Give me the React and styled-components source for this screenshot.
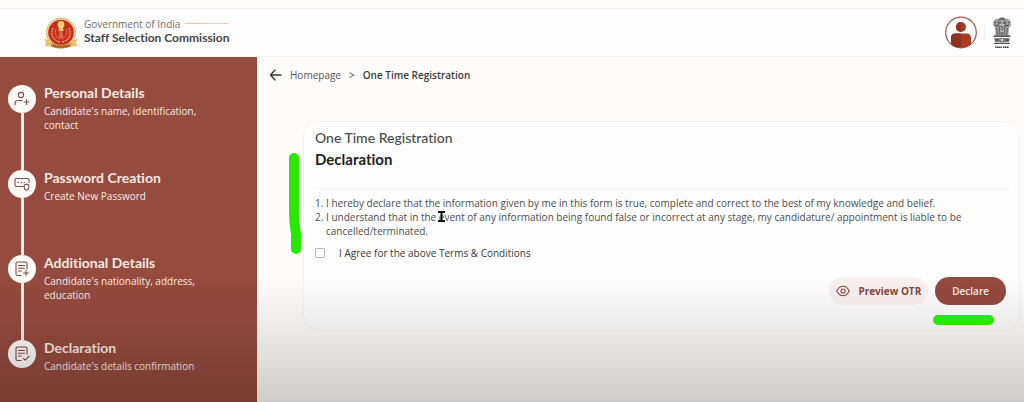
import styled, { createGlobalStyle } from "styled-components";

const GlobalStyle = createGlobalStyle`
    * {
        box-sizing: border-box;
    }
    body {
        margin: 0;
        background: #fefcfa;
        color: #454545;
        font-family: "Open Sans", sans-serif;
        font-size: 10px;
        line-height: 14px;
        font-variant-ligatures: none;
    }
    button, input {
        font: inherit;
    }
`;

const Page = styled.div`
    position: relative;
    min-height: 100vh;
    display: flex;
    flex-direction: column;
`;

const TopStrip = styled.div`
    height: 9px;
    background: #fffdfb;
    border-bottom: 1px solid #f2efec;
`;

const Header = styled.header`
    display: flex;
    align-items: center;
    justify-content: space-between;
    height: 48px;
    padding: 0 12px 0 43px;
    background: #fdfdfd;
    border-bottom: 1px solid #f6f3f1;
`;

const Brand = styled.div`
    display: flex;
    gap: 5px;
`;

const BrandTop = styled.div`
    display: flex;
    align-items: center;
    gap: 5px;
    color: #6f6f6f;
`;

const BrandLine = styled.span`
    flex: 1;
    height: 1px;
    background: linear-gradient(90deg, #f0c3a6, #ead0b4);
`;

const BrandName = styled.div`
    font-family: Lato, sans-serif;
    font-size: 12px;
    font-weight: 700;
    color: #454545;
`;

const HeaderRight = styled.div`
    display: flex;
    align-items: center;
    gap: 7px;
`;

const Separator = styled.span`
    width: 1px;
    height: 16px;
    background: #f3f1f0;
`;

const Body = styled.div`
    flex: 1;
    display: flex;
`;

const Sidebar = styled.aside`
    flex: 0 0 257px;
    padding: 28px 48px 20px 8px;
    background: #954b3e;
    color: #f8e9e3;
`;

const Steps = styled.ol`
    margin: 0;
    padding: 0;
    list-style: none;
`;

const Step = styled.li`
    display: flex;
    gap: 8px;
    min-height: ${(props) => (props.$last ? "0" : "85px")};
`;

const StepTrack = styled.div`
    display: flex;
    flex-direction: column;
    align-items: center;
`;

const StepCircle = styled.div`
    display: flex;
    align-items: center;
    justify-content: center;
    width: 28px;
    height: 28px;
    border-radius: 50%;
    background: #fdfbfa;
`;

const StepLine = styled.div`
    flex: 1;
    width: 3px;
    background: #f9efec;
`;

const StepTitle = styled.div`
    font-family: Lato, sans-serif;
    font-size: 14px;
    line-height: 16px;
    font-weight: 700;
    margin-bottom: 3px;
`;

const Main = styled.main`
    flex: 1;
    min-width: 0;
    padding: 11px 4px 24px 12px;
`;

const Breadcrumb = styled.nav`
    display: flex;
    align-items: center;
    gap: 8px;
`;

const Crumb = styled.a`
    display: flex;
    align-items: center;
    gap: 8px;
    color: #555;
    text-decoration: none;
`;

const Current = styled.span`
    color: #3d3d3d;
    font-weight: 600;
`;

const Card = styled.section`
    margin: 39px 0 0 34px;
    padding: 7px 9px 24px 11px;
    background: #fdfdfd;
    border: 1px solid #f5f2f0;
    border-radius: 15px;
`;

const CardLabel = styled.div`
    font-family: Lato, sans-serif;
    font-size: 14px;
    line-height: 18px;
    font-weight: 500;
    color: #4b4b4b;
`;

const CardTitle = styled.h1`
    margin: 3px 0 0;
    padding-bottom: 20px;
    border-bottom: 1px solid #f2f2f2;
    font-family: Lato, sans-serif;
    font-size: 15px;
    line-height: 18px;
    font-weight: 700;
    color: #222;
`;

const Terms = styled.ol`
    margin: 7px 0 8px;
    padding-left: 11px;
    color: #4d4d4d;
`;

const Agree = styled.label`
    display: flex;
    align-items: center;
    gap: 14px;
    font-weight: 500;
    color: #3a3a3a;
`;

const Checkbox = styled.input`
    appearance: none;
    width: 10px;
    height: 10px;
    margin: 0;
    background: #fff;
    border: 1px solid #b5b5b5;
    border-radius: 2px;
    &:checked {
        background: #954b3e;
    }
`;

const Actions = styled.div`
    display: flex;
    justify-content: flex-end;
    gap: 7px;
    margin-top: 17px;
    padding-right: 4px;
`;

const Button = styled.button`
    display: flex;
    align-items: center;
    justify-content: center;
    gap: 8px;
    height: 28px;
    padding: 0 ${(props) => (props.$primary ? "17px" : "7px")};
    border: 0;
    border-radius: 14px;
    background: ${(props) => (props.$primary ? "#954b3e" : "#f9f1ef")};
    color: ${(props) => (props.$primary ? "#f9ece7" : "#85453b")};
    font-weight: ${(props) => (props.$primary ? 600 : 700)};
`;

const Shade = styled.div`
    position: absolute;
    inset: auto 0 0;
    height: 126px;
    background: linear-gradient(rgba(0, 0, 0, 0), rgba(0, 0, 0, 0.08) 45%, rgba(0, 0, 0, 0.19));
    pointer-events: none;
`;

const Marks = styled.svg`
    position: absolute;
    top: 0;
    left: 0;
    pointer-events: none;
`;

const Highlight = styled.span`
    position: absolute;
    top: 315px;
    right: 30px;
    width: 61px;
    height: 10px;
    border-radius: 5px;
    background: #27e800;
`;

function CommissionLogo() {
    return (
        <svg width="36" height="32" viewBox="0 0 36 32" aria-hidden="true">
            <circle cx="18" cy="15.5" r="15" fill="#efd9a4" />
            <circle cx="18" cy="15.5" r="14.4" fill="none" stroke="#c9a45e" strokeDasharray="1.5 1" />
            <circle cx="18" cy="15.5" r="12.8" fill="#c92d1f" />
            <path d="M10 11c-3 6 0 13 7 14M26 11c3 6 0 13-7 14" fill="none" stroke="#e9a06a" strokeWidth="1.4" strokeDasharray="2 .7" />
            <path d="M12.5 12c-1 5 1 9 5 10M23.5 12c1 5-1 9-5 10" fill="none" stroke="#dd7650" strokeWidth="1" />
            <path d="M15 5.5c1-2 5-2 6 0l.5 3-1.5 2.5.6 3h-5.2l.6-3-1.5-2.5z" fill="#f2cf75" />
            <path d="M16.5 14h3l.7 7h-4.4z" fill="#db6944" />
            <path d="M1 22l6 1 2 4 9 1.5 9-1.5 2-4 6-1-2 3 1 4-6 .5c-6 2.6-14 2.6-20 0L2 29l1-4z" fill="#e4c273" />
            <path d="M8 25.5c6 3 14 3 20 0v4c-6 2.5-14 2.5-20 0z" fill="#c98f42" />
            <path d="M10 28.5c5 1.7 11 1.7 16 0" fill="none" stroke="#8d3c1f" strokeWidth="1.6" strokeDasharray="1.3 .6" />
        </svg>
    );
}

function UserAvatar() {
    return (
        <svg width="32" height="34" viewBox="0 0 32 34" aria-hidden="true">
            <circle cx="16" cy="16.5" r="15.3" fill="#fffdfc" stroke="#9c584b" strokeWidth="1.2" />
            <circle cx="16" cy="11" r="5" fill="#a63b2a" />
            <path d="M16 6a5 5 0 000 10z" fill="#8f3020" />
            <path d="M6 28v-6q0-4.500 4.500-4.500h11q4.500 0 4.500 4.500v6Q22 31.500 16 31.500T6 28z" fill="#a63b2a" />
            <path d="M6 28v-6q0-4.500 4.500-4.500H16V31.500q-6 0-10-3.500z" fill="#8f3020" />
        </svg>
    );
}

function NationalEmblem() {
    return (
        <svg width="20" height="34" viewBox="0 0 20 34" aria-hidden="true">
            <path d="M6 3q4-4 8 0l1.500-.5 3 2.500.5 4-2 3-.5 5 .5 3H3l.5-3L3 12 1 9l.5-4 3-2.500z" fill="#a0a0a0" />
            <path d="M7 4q3-3 6 0M7 7h2M11 7h2M8.500 10q1.500 1 3 0M2 6l2 1M18 6l-2 1M3 9l3 1M17 9l-3 1" fill="none" stroke="#3d3d3d" strokeWidth="1" />
            <path d="M6.500 5q-1 5 1 7l.5 7M13.500 5q1 5-1 7l-.5 7M4.500 12l1 7M15.500 12l-1 7M10 12v7" fill="none" stroke="#505050" strokeWidth=".9" />
            <path d="M8 8l2 2 2-2M8 14l2 2 2-2" fill="none" stroke="#e4e4e4" strokeWidth=".8" />
            <path d="M1.500 19.500h17v1.500h-17z" fill="#555" />
            <path d="M2 22h16l-1 4.500H3z" fill="#8a8a8a" />
            <circle cx="10" cy="24" r="1.900" fill="#ddd" stroke="#444" strokeWidth=".7" />
            <path d="M3.500 24h3M13.500 24h3" stroke="#444" strokeWidth="1.500" />
            <path d="M2 27.500h16" stroke="#555" strokeWidth="1" />
            <path d="M3 31.200h7M11 31.200h6" stroke="#3a3a3a" strokeWidth="1.500" strokeDasharray="1.500 .4" />
        </svg>
    );
}

const iconPaths = {
    user: (
        <>
            <circle cx="7" cy="4" r="2.600" />
            <path d="M1 14v-1.500q0-3 3-3h4M12.500 8.500v5M10 11h5" />
        </>
    ),
    password: (
        <>
            <path d="M9 10.500H2.500q-1.500 0-1.500-1.500V4q0-1.500 1.500-1.500h11Q15 2.500 15 4v2.500" />
            <path d="M4 6.500h.6M7 6.500h.6M10 6.500h.6" />
            <path d="M12.500 8l2.300 1v2.500q0 1.800-2.300 2.800-2.300-1-2.300-2.800V9z" />
        </>
    ),
    add: (
        <>
            <path d="M7 14.500H3.500Q2 14.500 2 13V2.500Q2 1 3.500 1h8Q13 1 13 2.500V8" />
            <path d="M4.500 4.500h6M4.500 7.300h6M4.500 10h3M12 9.500v5M9.500 12h5" />
        </>
    ),
    check: (
        <>
            <path d="M7 14.500H3.500Q2 14.500 2 13V2.500Q2 1 3.500 1h8Q13 1 13 2.500V8" />
            <path d="M4.500 4.500h6M4.500 7.300h6M4.500 10h3M9.500 12.500l1.700 1.700 3.800-3.800" />
        </>
    ),
};

function StepIcon({ name }) {
    return (
        <svg width="16" height="16" viewBox="0 0 16 16" fill="none" stroke="#7e4a42" strokeWidth="1.1" strokeLinecap="round" strokeLinejoin="round" aria-hidden="true">
            {iconPaths[name]}
        </svg>
    );
}

function ArrowLeft() {
    return (
        <svg width="13" height="12" viewBox="0 0 13 12" fill="none" stroke="#333" strokeWidth="1.3" strokeLinecap="round" strokeLinejoin="round" aria-hidden="true">
            <path d="M12 6H1.500M6 1L1.500 6 6 11" />
        </svg>
    );
}

function Eye() {
    return (
        <svg width="14" height="12" viewBox="0 0 14 12" fill="none" stroke="#85453b" strokeWidth="1.1" aria-hidden="true">
            <path d="M.8 6Q3 1.200 7 1.200T13.200 6Q11 10.800 7 10.800T.8 6z" />
            <circle cx="7" cy="6" r="2" />
        </svg>
    );
}

const steps = [
    { icon: "user", title: "Personal Details", text: "Candidate's name, identification, contact" },
    { icon: "password", title: "Password Creation", text: "Create New Password" },
    { icon: "add", title: "Additional Details", text: "Candidate's nationality, address, education" },
    { icon: "check", title: "Declaration", text: "Candidate's details confirmation" },
];

function App() {
    return (
        <Page>
            <GlobalStyle />
            <TopStrip />
            <Header>
                <Brand>
                    <CommissionLogo />
                    <div>
                        <BrandTop>
                            Government of India
                            <BrandLine />
                        </BrandTop>
                        <BrandName>Staff Selection Commission</BrandName>
                    </div>
                </Brand>
                <HeaderRight>
                    <UserAvatar />
                    <Separator />
                    <NationalEmblem />
                </HeaderRight>
            </Header>
            <Body>
                <Sidebar>
                    <Steps>
                        {steps.map((step, i) => (
                            <Step key={step.title} $last={i === steps.length - 1}>
                                <StepTrack>
                                    <StepCircle>
                                        <StepIcon name={step.icon} />
                                    </StepCircle>
                                    {i < steps.length - 1 && <StepLine />}
                                </StepTrack>
                                <div>
                                    <StepTitle>{step.title}</StepTitle>
                                    <div>{step.text}</div>
                                </div>
                            </Step>
                        ))}
                    </Steps>
                </Sidebar>
                <Main>
                    <Breadcrumb>
                        <Crumb href="#home">
                            <ArrowLeft />
                            Homepage
                        </Crumb>
                        <span>&gt;</span>
                        <Current>One Time Registration</Current>
                    </Breadcrumb>
                    <Card>
                        <CardLabel>One Time Registration</CardLabel>
                        <CardTitle>Declaration</CardTitle>
                        <Terms>
                            <li>
                                I hereby declare that the information given by me in this form is true,
                                complete and correct to the best of my knowledge and belief.
                            </li>
                            <li>
                                I understand that in the event of any information being found false or
                                incorrect at any stage, my candidature/ appointment is liable to be
                                cancelled/terminated.
                            </li>
                        </Terms>
                        <Agree>
                            <Checkbox type="checkbox" />
                            I Agree for the above Terms &amp; Conditions
                        </Agree>
                        <Actions>
                            <Button type="button">
                                <Eye />
                                Preview OTR
                            </Button>
                            <Button type="button" $primary>
                                Declare
                            </Button>
                        </Actions>
                    </Card>
                </Main>
            </Body>
            <Shade />
            <Marks width="460" height="260" viewBox="0 0 460 260" aria-hidden="true">
                <path d="M294 158V207Q294 222 296 234V249" fill="none" stroke="#27e800" strokeWidth="10" strokeLinecap="round" />
                <path d="M438 212h7M441.500 212v9M438 221h7" fill="none" stroke="#111" strokeWidth="2" />
            </Marks>
            <Highlight />
        </Page>
    );
}

export default App;
